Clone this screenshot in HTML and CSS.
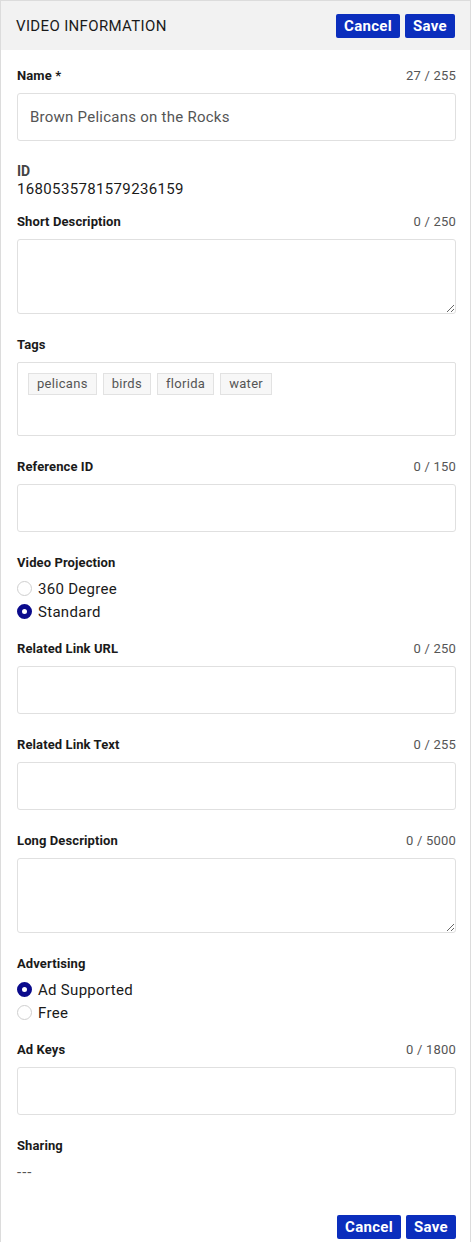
FILE: index.html
```html
<!DOCTYPE html>
<html lang="en">
<head>
<meta charset="utf-8">
<title>Video Information</title>
<link rel="stylesheet" href="styles.css">
</head>
<body>
<div class="panel">
  <header class="panel-head">
    <h1 class="panel-title">VIDEO INFORMATION</h1>
    <div class="actions">
      <button class="btn">Cancel</button>
      <button class="btn">Save</button>
    </div>
  </header>
  <div class="panel-body">
    <div class="field">
      <div class="label-row"><label class="label">Name *</label><span class="count">27 / 255</span></div>
      <input class="input" type="text" value="Brown Pelicans on the Rocks">
    </div>
    <div class="field field-id">
      <div class="id-label">ID</div>
      <div class="id-value">1680535781579236159</div>
    </div>
    <div class="field">
      <div class="label-row"><label class="label">Short Description</label><span class="count">0 / 250</span></div>
      <textarea class="textarea"></textarea>
    </div>
    <div class="field">
      <div class="label-row"><label class="label">Tags</label></div>
      <div class="tags">
        <span class="tag">pelicans</span>
        <span class="tag">birds</span>
        <span class="tag">florida</span>
        <span class="tag">water</span>
      </div>
    </div>
    <div class="field">
      <div class="label-row"><label class="label">Reference ID</label><span class="count">0 / 150</span></div>
      <input class="input" type="text">
    </div>
    <div class="field field-radio">
      <div class="label-row"><label class="label">Video Projection</label></div>
      <div class="radio"><span class="dot"></span>360 Degree</div>
      <div class="radio"><span class="dot on"></span>Standard</div>
    </div>
    <div class="field">
      <div class="label-row"><label class="label">Related Link URL</label><span class="count">0 / 250</span></div>
      <input class="input" type="text">
    </div>
    <div class="field">
      <div class="label-row"><label class="label">Related Link Text</label><span class="count">0 / 255</span></div>
      <input class="input" type="text">
    </div>
    <div class="field">
      <div class="label-row"><label class="label">Long Description</label><span class="count">0 / 5000</span></div>
      <textarea class="textarea"></textarea>
    </div>
    <div class="field field-radio">
      <div class="label-row"><label class="label">Advertising</label></div>
      <div class="radio"><span class="dot on"></span>Ad Supported</div>
      <div class="radio"><span class="dot"></span>Free</div>
    </div>
    <div class="field">
      <div class="label-row"><label class="label">Ad Keys</label><span class="count">0 / 1800</span></div>
      <input class="input" type="text">
    </div>
    <div class="field field-share">
      <div class="label-row"><label class="label">Sharing</label></div>
      <div class="share-value">---</div>
    </div>
    <div class="footer-actions">
      <button class="btn">Cancel</button>
      <button class="btn">Save</button>
    </div>
  </div>
</div>
</body>
</html>
```

FILE: styles.css
```css
* { box-sizing: border-box; }
html, body { margin: 0; padding: 0; background: #fff; }
body {
  font-family: Roboto, "Liberation Sans", sans-serif;
  color: #1a1a1a;
}
.panel {
  width: 471px;
  height: 1242px;
  border: 1px solid #dcdcdc;
  border-bottom: none;
  display: flex;
  flex-direction: column;
}
.panel-head {
  height: 49px;
  background: #f2f2f2;
  display: flex;
  align-items: center;
  justify-content: space-between;
  padding: 0 15px 0 15px;
}
.panel-title {
  margin: 0;
  font-size: 15px;
  font-weight: 400;
  color: #1a1a1a;
  letter-spacing: 0.35px;
}
.actions { display: flex; gap: 5px; }
.btn {
  height: 24px;
  padding: 0 8px;
  background: #0b2ebd;
  color: #fff;
  border: none;
  border-radius: 2px;
  font-family: Roboto, "Liberation Sans", sans-serif;
  font-weight: 700;
  font-size: 15px;
  letter-spacing: 0.3px;
  line-height: 24px;
}
.panel-body {
  padding: 16px 14px 0 16px;
  display: flex;
  flex-direction: column;
}
.field { display: flex; flex-direction: column; margin-bottom: 21px; }
.label-row {
  display: flex;
  justify-content: space-between;
  align-items: center;
  height: 18px;
  margin-bottom: 9px;
}
.label { font-size: 13px; font-weight: 700; color: #1a1a1a; letter-spacing: 0.1px; }
.count { font-size: 13px; color: #555; letter-spacing: 0.2px; }
.input {
  height: 48px;
  border: 1px solid #e0e0e0;
  border-radius: 3px;
  padding: 0 12px;
  font-family: Roboto, "Liberation Sans", sans-serif;
  font-size: 15px;
  letter-spacing: 0.25px;
  color: #555;
  outline: none;
}
.textarea {
  height: 75px;
  border: 1px solid #e0e0e0;
  border-radius: 3px;
  resize: vertical;
  font-family: inherit;
  outline: none;
  display: block;
}
.field-id { margin-bottom: 14px; }
.id-label { font-size: 14px; font-weight: 700; color: #444; line-height: 18px; }
.id-value { font-size: 15px; color: #1a1a1a; line-height: 18px; letter-spacing: 0.35px; }
.tags {
  height: 74px;
  border: 1px solid #e0e0e0;
  border-radius: 2px;
  padding: 10px 10px;
  display: flex;
  align-items: flex-start;
  gap: 6px;
}
.tag {
  height: 22px;
  line-height: 20px;
  padding: 0 8px;
  background: #f7f7f7;
  border: 1px solid #e2e2e2;
  font-size: 13px;
  letter-spacing: 0.3px;
  color: #555;
}
.field-radio { margin-bottom: 16px; }
.field-radio .label-row { margin-bottom: 6px; }
.radio {
  height: 23px;
  display: flex;
  align-items: center;
  gap: 6px;
  font-size: 15px;
  letter-spacing: 0.3px;
  color: #1a1a1a;
}
.dot {
  width: 15px;
  height: 15px;
  border-radius: 50%;
  border: 1px solid #cfcfcf;
  background: #fff;
}
.dot.on {
  border: 5px solid #0b0b8c;
  background: #fff;
}
.field-share { margin-bottom: 0; }
.share-value { font-size: 15px; color: #555; line-height: 18px; letter-spacing: 1px; }
.footer-actions {
  display: flex;
  justify-content: flex-end;
  gap: 5px;
  margin-top: 34px;
}
```
